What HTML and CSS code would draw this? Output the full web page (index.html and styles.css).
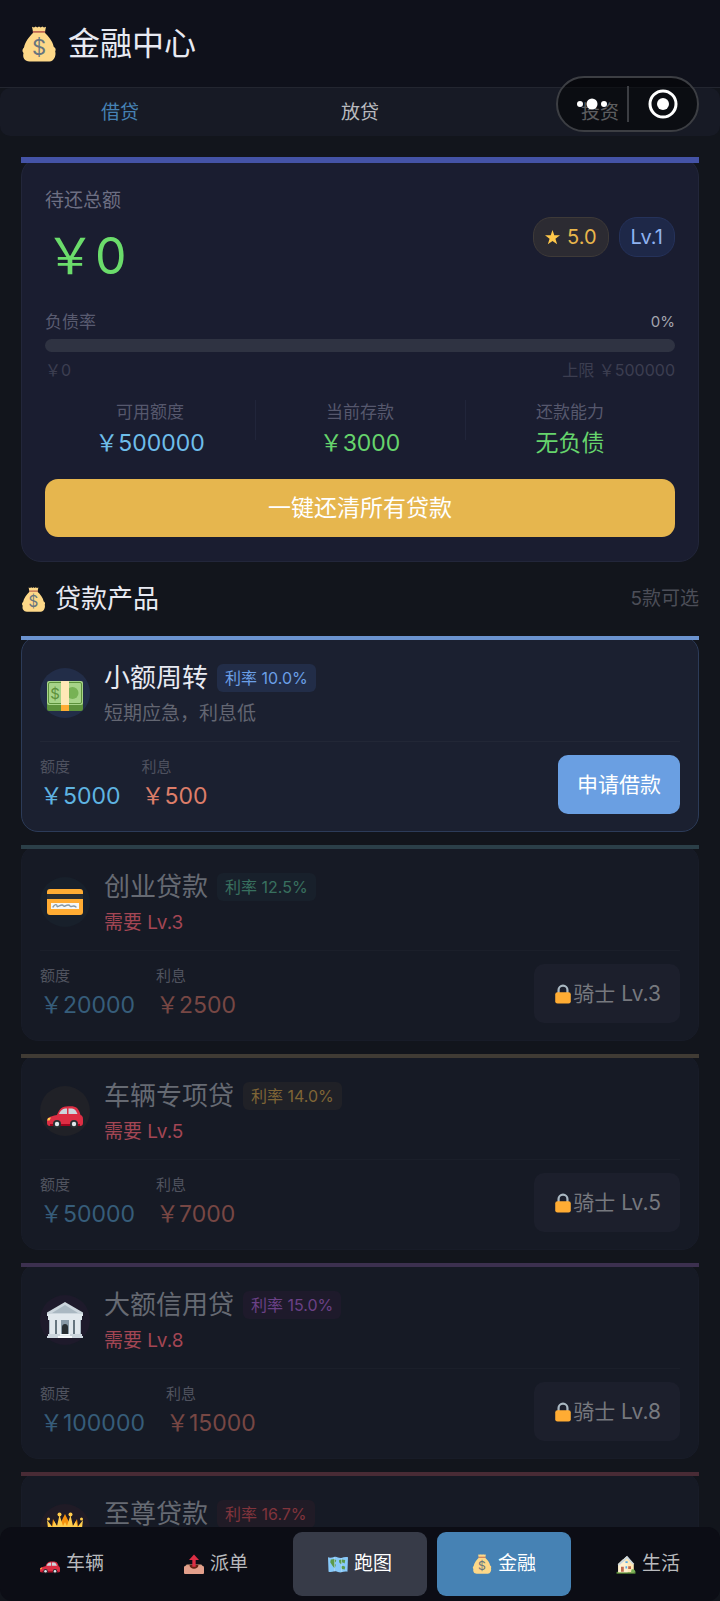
FILE: index.html
```html
<!DOCTYPE html>
<html lang="zh-CN">
<head>
    <meta charset="UTF-8">
    <meta name="viewport" content="width=device-width, initial-scale=1.0">
    <title>金融中心</title>
    <link rel="stylesheet" href="styles.css">
</head>
<body>
    <!-- icon sprites -->
    <svg class="sprites" aria-hidden="true">
        <symbol id="icon-bag" viewBox="0 0 36 36">
            <path fill="#fdd888" d="M11 .8l2 .7L14.700.5l1.600 1L18 .5l1.700 1 1.600-1 1.700 1 2-.7-1.200 6c4 3.800 8 8.700 8.900 14 1.900 1 2.500 2.700 1.500 4.800 1.200 3.900-1.200 9.900-5.700 9.900H8.500c-4.700 0-7.300-4-6-8.500-1.600-1.700-1.300-4 .5-5.500.9-5.400 5.200-10.900 9.200-14.700z"/>
            <path fill="#bf6952" d="M12.300 5h11.400c.8 0 .8 1.800 0 1.800H12.300c-.8 0-.8-1.800 0-1.800z"/>
            <text class="dollar" x="18" y="29" font-size="22" text-anchor="middle">$</text>
        </symbol>
        <symbol id="icon-cash" viewBox="0 0 36 36">
            <path fill="#5c913b" d="M0 28h36v6a2 2 0 0 1-2 2H2a2 2 0 0 1-2-2z"/>
            <rect fill="#a6d388" y="6" width="36" height="24" rx="2"/>
            <rect fill="none" stroke="#5c913b" x="1.500" y="7.500" width="33" height="21" rx="1.500"/>
            <circle fill="#77b255" cx="25.500" cy="18" r="6"/>
            <text class="dollar green" x="8" y="23.500" font-size="15" text-anchor="middle">$</text>
            <path fill="#ffe8b6" d="M14 6h8v24h-8z"/>
            <path fill="#ffac33" d="M14 30h8v6h-8z"/>
        </symbol>
        <symbol id="icon-card" viewBox="0 0 36 36">
            <rect fill="#ffac33" y="5" width="36" height="26" rx="3"/>
            <path fill="#292f33" d="M0 10h36v5H0z"/>
            <path fill="#f4f7f9" d="M4 19h28v6H4z"/>
            <path fill="none" stroke="#8899a6" stroke-width="1.400" stroke-linecap="round" d="M6 23c2-3 4-3 4-1s3-1 5-1 1 2 3 1 4-2 5 0 3-2 6 1"/>
        </symbol>
        <symbol id="icon-car" viewBox="0 0 36 36">
            <path fill="#dd2e44" d="M10 22c2-5 4-8 9-8.500 6-.5 9-.2 11 1.500 2 2 3 5 3.500 7 1.800.5 2.500 2 2.500 4v4c0 2-1 3-3 3H3c-2 0-3-1.200-3-3v-2c0-3 2-4.500 10-6z"/>
            <path fill="#ccd6dd" d="M12 21c1.500-3.500 3.500-5.500 8-5.500V21zM21.500 15.500c4-.2 6 .2 7.500 2.500l1.500 3h-9z"/>
            <path fill="#a0041e" d="M3 31h30v2H3z"/>
            <circle fill="#292f33" cx="10" cy="31" r="4"/><circle fill="#292f33" cx="27" cy="31" r="4"/>
            <circle fill="#e1e8ed" cx="10" cy="31" r="2.200"/><circle fill="#e1e8ed" cx="27" cy="31" r="2.200"/>
            <path fill="#ffcc4d" d="M1 25l3-.5-1.500 3H.2z"/>
        </symbol>
        <symbol id="icon-bank" viewBox="0 0 36 36">
            <path fill="#aab8c2" d="M2 16h32v17H2z"/>
            <path fill="#66757f" d="M8 18h4v14H8zM24 18h4v14h-4z"/>
            <path fill="#8899a6" d="M13 18h10v15H13z"/>
            <path fill="#292f33" d="M15 33v-8c0-4 6-4 6 0v8z"/>
            <path fill="#e1e8ed" d="M3 18h5v14H3zM10 18h4v14h-4zM22 18h4v14h-4zM28 18h5v14h-5z"/>
            <path fill="#ccd6dd" d="M18 0l18 10.500V13H0v-2.500z"/>
            <path fill="#aab8c2" d="M18 3l13 8H5z"/>
            <path fill="#e1e8ed" d="M0 12h36v2H0zM1 14h34v4H1z"/>
            <path fill="#ccd6dd" d="M1 32h34v2H1zM0 34h36v2H0z"/>
            <path fill="#f5f8fa" d="M13 32h10v1.500H13zM11 34h14v2H11z"/>
        </symbol>
        <symbol id="icon-crown" viewBox="0 0 36 36">
            <path fill="#f4900c" d="M3 30L6 8l5 9 7-14 7 14 5-9 3 22z"/>
            <path fill="#ffcc4d" d="M3 34L0 9l5.500 7L7 10l3 5 2.500-11 3.500 11 2-4 2 4 3.500-11L26 15l3-5 1.500 6L36 9l-3 25z"/>
            <path fill="#ffac33" d="M6 22h24v3H6z"/>
            <g fill="#ffcc4d"><circle cx="1.500" cy="8" r="1.500"/><circle cx="12.500" cy="3.500" r="2"/><circle cx="23.500" cy="3.500" r="2"/><circle cx="34.500" cy="8" r="1.500"/></g>
        </symbol>
        <symbol id="icon-lock" viewBox="0 0 36 36">
            <path fill="none" stroke="#aab8c2" stroke-width="4" d="M10 17v-6a8 8 0 0 1 16 0v6"/>
            <rect fill="#ffac33" x="4" y="15" width="28" height="20" rx="4"/>
        </symbol>
        <symbol id="icon-outbox" viewBox="0 0 36 36">
            <path fill="#d99e82" d="M5 19h26l5 5H0z"/>
            <rect fill="#e39f8b" y="22" width="36" height="14" rx="2"/>
            <path fill="#662113" d="M10 20h16c0 9-16 9-16 0z"/>
            <path fill="#dd2e44" d="M18 1l9 10h-6v12h-6V11H9z"/>
        </symbol>
        <symbol id="icon-map" viewBox="0 0 36 36">
            <path fill="#88c9f9" d="M0 6c4 2 8 0 12-1s8 3 12 2 8-2 12-1l-1 26c-4-1-7 0-11 1s-8-3-12-2-7 2-11 1z"/>
            <path fill="#5c9a4a" d="M5 10l7-1 3 3-3 4 2 4-2 6-4-5-4-6zM20 11l5-1 6 1-1 6-4-2-2 4-4-4zM23 23l4-2 4 2-1 5-5-1z"/>
            <path fill="#bbddf5" d="M11 6h1v25h-1zM24 7h1v25h-1z"/>
        </symbol>
        <symbol id="icon-house" viewBox="0 0 36 36">
            <path fill="#5c913b" d="M1 32h34v3.500H1z"/>
            <path fill="#ffe8b6" d="M4 18L19 4l13 14v15H4z"/>
            <path fill="#fff1d0" d="M4 18l8-8 9 9v14H4z"/>
            <path fill="#ccd6dd" d="M3 19L20 3l13 15-3 1L20 8 5 21z"/>
            <path fill="#c1694f" d="M9 23h5v9H9zM22 22h5v5h-5z"/>
            <path fill="#55acee" d="M17 22h3v4h-3zM17 13h4v3h-4z"/>
            <path fill="#77b255" d="M28 28c4-2 7 1 7 5h-8z"/>
        </symbol>
    </svg>

    <div class="app">
        <header class="header">
            <h1><svg class="icon-title" aria-hidden="true"><use href="#icon-bag"/></svg>金融中心</h1>
        </header>

        <div class="capsule">
            <button class="capsule-button" aria-label="更多">
                <svg class="dots" viewBox="0 0 32 12"><circle cx="4" cy="6" r="3"/><circle cx="16" cy="6" r="5.500"/><circle cx="28" cy="6" r="3"/></svg>
            </button>
            <button class="capsule-button" aria-label="关闭">
                <svg class="target" viewBox="0 0 30 30"><circle class="ring" cx="15" cy="15" r="13"/><circle cx="15" cy="15" r="6"/></svg>
            </button>
        </div>

        <nav class="tabs">
            <button class="tab active">借贷</button>
            <button class="tab">放贷</button>
            <button class="tab">投资</button>
        </nav>

        <main class="content">
            <section class="summary">
                <div class="summary-top">
                    <div>
                        <div class="summary-label">待还总额</div>
                        <div class="summary-total">￥0</div>
                    </div>
                    <div class="pills">
                        <span class="pill star"><svg class="icon-star" viewBox="0 0 20 20" aria-hidden="true"><path d="M10 0l2.400 7.100H20l-6.100 4.500 2.300 7.400-6.200-4.500L3.800 19l2.300-7.400L0 7.100h7.600z"/></svg>5.0</span>
                        <span class="pill level">Lv.1</span>
                    </div>
                </div>

                <div class="ratio">
                    <span>负债率</span>
                    <span class="ratio-value">0%</span>
                </div>
                <div class="ratio-bar"></div>
                <div class="ratio-range">
                    <span>￥0</span>
                    <span>上限 ￥500000</span>
                </div>

                <div class="stats">
                    <div class="stat">
                        <div class="stat-label">可用额度</div>
                        <div class="stat-value blue">￥500000</div>
                    </div>
                    <div class="stat">
                        <div class="stat-label">当前存款</div>
                        <div class="stat-value green">￥3000</div>
                    </div>
                    <div class="stat">
                        <div class="stat-label">还款能力</div>
                        <div class="stat-value green">无负债</div>
                    </div>
                </div>

                <button class="repay">一键还清所有贷款</button>
            </section>

            <div class="section-head">
                <h2><svg class="icon-section" aria-hidden="true"><use href="#icon-bag"/></svg>贷款产品</h2>
                <span class="section-count">5款可选</span>
            </div>

            <article class="loan theme-blue">
                <div class="loan-head">
                    <div class="loan-icon"><svg aria-hidden="true"><use href="#icon-cash"/></svg></div>
                    <div>
                        <div class="loan-title"><h3>小额周转</h3><span class="rate">利率 10.0%</span></div>
                        <div class="loan-desc">短期应急，利息低</div>
                    </div>
                </div>
                <div class="loan-body">
                    <div><div class="label">额度</div><div class="amount">￥5000</div></div>
                    <div><div class="label">利息</div><div class="amount interest">￥500</div></div>
                    <button class="apply">申请借款</button>
                </div>
            </article>

            <article class="loan locked theme-green">
                <div class="loan-head">
                    <div class="loan-icon"><svg aria-hidden="true"><use href="#icon-card"/></svg></div>
                    <div>
                        <div class="loan-title"><h3>创业贷款</h3><span class="rate">利率 12.5%</span></div>
                        <div class="loan-desc">需要 Lv.3</div>
                    </div>
                </div>
                <div class="loan-body">
                    <div><div class="label">额度</div><div class="amount">￥20000</div></div>
                    <div><div class="label">利息</div><div class="amount interest">￥2500</div></div>
                    <button class="apply" disabled><svg class="icon-lock" aria-hidden="true"><use href="#icon-lock"/></svg>骑士 Lv.3</button>
                </div>
            </article>

            <article class="loan locked theme-gold">
                <div class="loan-head">
                    <div class="loan-icon"><svg aria-hidden="true"><use href="#icon-car"/></svg></div>
                    <div>
                        <div class="loan-title"><h3>车辆专项贷</h3><span class="rate">利率 14.0%</span></div>
                        <div class="loan-desc">需要 Lv.5</div>
                    </div>
                </div>
                <div class="loan-body">
                    <div><div class="label">额度</div><div class="amount">￥50000</div></div>
                    <div><div class="label">利息</div><div class="amount interest">￥7000</div></div>
                    <button class="apply" disabled><svg class="icon-lock" aria-hidden="true"><use href="#icon-lock"/></svg>骑士 Lv.5</button>
                </div>
            </article>

            <article class="loan locked theme-purple">
                <div class="loan-head">
                    <div class="loan-icon"><svg aria-hidden="true"><use href="#icon-bank"/></svg></div>
                    <div>
                        <div class="loan-title"><h3>大额信用贷</h3><span class="rate">利率 15.0%</span></div>
                        <div class="loan-desc">需要 Lv.8</div>
                    </div>
                </div>
                <div class="loan-body">
                    <div><div class="label">额度</div><div class="amount">￥100000</div></div>
                    <div><div class="label">利息</div><div class="amount interest">￥15000</div></div>
                    <button class="apply" disabled><svg class="icon-lock" aria-hidden="true"><use href="#icon-lock"/></svg>骑士 Lv.8</button>
                </div>
            </article>

            <article class="loan locked theme-red">
                <div class="loan-head">
                    <div class="loan-icon"><svg aria-hidden="true"><use href="#icon-crown"/></svg></div>
                    <div class="loan-title"><h3>至尊贷款</h3><span class="rate">利率 16.7%</span></div>
                </div>
            </article>
        </main>

        <nav class="bottom-nav">
            <button class="nav-item"><svg aria-hidden="true"><use href="#icon-car"/></svg>车辆</button>
            <button class="nav-item"><svg aria-hidden="true"><use href="#icon-outbox"/></svg>派单</button>
            <button class="nav-item raised"><svg aria-hidden="true"><use href="#icon-map"/></svg>跑图</button>
            <button class="nav-item active"><svg aria-hidden="true"><use href="#icon-bag"/></svg>金融</button>
            <button class="nav-item"><svg aria-hidden="true"><use href="#icon-house"/></svg>生活</button>
        </nav>
    </div>
</body>
</html>
```
FILE: styles.css
```css
* {
    box-sizing: border-box;
}

body {
    margin: 0;
    background-color: #12151c;
    color: #e8eaf2;
    font-family: Inter, "Noto Sans CJK SC", sans-serif;
    font-size: 19px;
}

button {
    margin: 0;
    padding: 0;
    border: none;
    background: none;
    color: inherit;
    font: inherit;
}

h1, h2, h3 {
    margin: 0;
    font-weight: 400;
}

.sprites {
    position: absolute;
    width: 0;
    height: 0;
}

.dollar {
    fill: #67757f;
    font-family: Inter, sans-serif;
}

.dollar.green {
    fill: #5c913b;
}

.app {
    position: relative;
    display: flex;
    flex-direction: column;
    height: 100vh;
}

/* header */
.header {
    flex: none;
    padding: 20px 21px 19px;
    border-bottom: 1px solid #232630;
    background-color: #0f111b;
}

.header h1 {
    display: flex;
    align-items: center;
    gap: 11px;
    font-size: 32px;
    line-height: 48px;
}

.icon-title {
    width: 36px;
    height: 36px;
}

.capsule {
    position: absolute;
    top: 76px;
    right: 21px;
    z-index: 2;
    display: flex;
    align-items: center;
    width: 143px;
    height: 56px;
    border: 2px solid #3c3e43;
    border-radius: 28px;
    background-color: rgba(0, 0, 0, 0.5);
}

.capsule-button {
    display: flex;
    flex: 1;
    align-items: center;
    justify-content: center;
    height: 36px;
}

.capsule-button + .capsule-button {
    border-left: 2px solid #3c3e43;
}

.capsule svg {
    fill: #fff;
}

.dots {
    width: 32px;
    height: 12px;
}

.target {
    width: 30px;
    height: 30px;
}

.target .ring {
    fill: none;
    stroke: #fff;
    stroke-width: 3;
}

/* tabs */
.tabs {
    display: flex;
    flex: none;
    border-radius: 10px;
    background-color: #171a25;
}

.tab {
    flex: 1;
    padding-top: 2px;
    color: #b9babf;
    line-height: 46px;
}

.tab.active {
    color: #4682b4;
}

.content {
    flex: 1;
    min-height: 0;
    padding: 21px 21px 0;
    overflow-y: auto;
    scrollbar-width: none;
}

/* summary card */
.summary {
    position: relative;
    padding: 24px 23px;
    border: 1px solid #22263a;
    border-radius: 20px;
    background-color: #1a1d30;
}

.summary::before,
.loan::before {
    content: "";
    position: absolute;
    top: -1px;
    left: -1px;
    right: -1px;
    height: 6px;
    background-color: #4453a6;
}

.summary-top {
    display: flex;
    align-items: center;
    justify-content: space-between;
}

.summary-label {
    color: #6d6f83;
    line-height: 38px;
}

.summary-total {
    color: #6bdc6b;
    font-size: 50px;
    line-height: 72px;
}

.pills {
    display: flex;
    gap: 10px;
}

.pill {
    display: flex;
    align-items: center;
    gap: 7px;
    height: 40px;
    padding: 0 11px;
    border: 1px solid;
    border-radius: 18px;
    font-size: 20px;
}

.pill.star {
    border-color: #3e3a38;
    background-color: #2c2b32;
    color: #e8b64c;
}

.pill.level {
    border-color: #25325a;
    background-color: #1e2848;
    color: #8fb2f0;
}

.icon-star {
    width: 15px;
    height: 15px;
    fill: #ffc84a;
}

.ratio,
.ratio-range {
    display: flex;
    justify-content: space-between;
}

.ratio {
    margin-top: 15px;
    color: #595b70;
    font-size: 17px;
    line-height: 30px;
}

.ratio-value {
    color: #a4a5ae;
    font-size: 15px;
}

.ratio-bar {
    height: 13px;
    margin-top: 2px;
    border-radius: 7px;
    background-color: #2f3342;
}

.ratio-range {
    color: #3c3e50;
    font-size: 16px;
    line-height: 36px;
}

.stats {
    display: flex;
    margin: 10px 0 18px;
}

.stat {
    position: relative;
    flex: 1;
    text-align: center;
}

.stat + .stat::before {
    content: "";
    position: absolute;
    top: 2px;
    left: 0;
    width: 1px;
    height: 40px;
    background-color: #21253a;
}

.stat-label {
    color: #56586d;
    font-size: 17px;
    line-height: 28px;
}

.stat-value {
    font-size: 23px;
    line-height: 35px;
}

.blue {
    color: #6ebeea;
}

.green {
    color: #66d46c;
}

.repay {
    display: block;
    width: 100%;
    border-radius: 13px;
    background-color: #e6b64e;
    color: #fff;
    font-size: 23px;
    line-height: 58px;
}

.section-head {
    display: flex;
    align-items: center;
    justify-content: space-between;
    height: 74px;
}

.section-head h2 {
    display: flex;
    align-items: center;
    gap: 9px;
    font-size: 26px;
    line-height: 36px;
}

.icon-section {
    width: 25px;
    height: 25px;
}

.section-count {
    color: #4c4e58;
    line-height: 28px;
}

/* loan cards */
.loan {
    position: relative;
    margin-bottom: 13px;
    padding: 20px 18px 17px;
    border: 1px solid #2c3b58;
    border-radius: 17px;
    background-color: #1b2030;
}

.loan::before {
    height: 4px;
    background-color: #6b93cf;
}

.loan-head {
    display: flex;
    align-items: center;
    gap: 14px;
    padding-bottom: 12px;
    border-bottom: 1px solid #222736;
}

.loan-icon {
    display: flex;
    align-items: center;
    justify-content: center;
    width: 50px;
    height: 50px;
    border-radius: 50%;
    background-color: #222d48;
}

.loan-icon svg {
    width: 36px;
    height: 36px;
}

.loan-title {
    display: flex;
    align-items: center;
    gap: 9px;
    height: 42px;
}

.loan-title h3 {
    font-size: 26px;
    line-height: 36px;
}

.rate {
    padding: 0 8px;
    border-radius: 6px;
    background-color: #222d48;
    color: #6b9fe6;
    font-size: 16px;
    line-height: 28px;
}

.loan-desc {
    color: #636672;
    line-height: 30px;
}

.loan-body {
    display: flex;
    gap: 21px;
    padding-top: 13px;
}

.label {
    color: #4e515f;
    font-size: 15px;
    line-height: 24px;
}

.amount {
    color: #5fb4e2;
    font-size: 23px;
    line-height: 35px;
}

.amount.interest {
    color: #dd7d69;
}

.apply {
    display: flex;
    align-items: center;
    margin-left: auto;
    padding: 0 19px;
    border-radius: 10px;
    background-color: #6a9fe2;
    color: #fff;
    font-size: 21px;
    line-height: 28px;
}

.locked {
    border-color: #181c28;
    background-color: #161a25;
}

.locked .loan-head {
    border-color: #1b1f2a;
}

.locked .loan-title h3 {
    color: #666a73;
}

.locked .loan-desc {
    color: #a34654;
}

.locked .label {
    color: #50535f;
}

.locked .amount {
    color: #365d7a;
}

.locked .amount.interest {
    color: #774744;
}

.locked .apply {
    background-color: #1c1f2c;
    color: #76787e;
}

.icon-lock {
    width: 20px;
    height: 20px;
}

.theme-green::before {
    background-color: #2b3f48;
}

.theme-green .loan-icon,
.theme-green .rate {
    background-color: #18202b;
}

.theme-green .rate {
    color: #38705f;
}

.theme-gold::before {
    background-color: #403b34;
}

.theme-gold .loan-icon,
.theme-gold .rate {
    background-color: #202127;
}

.theme-gold .rate {
    color: #7f6536;
}

.theme-purple::before {
    background-color: #3c304f;
}

.theme-purple .loan-icon,
.theme-purple .rate {
    background-color: #1e1a2b;
}

.theme-purple .rate {
    color: #6b4186;
}

.theme-red::before {
    background-color: #482b35;
}

.theme-red .loan-icon,
.theme-red .rate {
    background-color: #201b26;
}

.theme-red .rate {
    color: #80343c;
}

.theme-red .loan-head {
    min-height: 85px;
    align-items: flex-start;
}

.theme-red .loan-icon {
    margin-top: 11px;
}

/* bottom navigation */
.bottom-nav {
    display: flex;
    flex: none;
    gap: 10px;
    padding: 5px;
    border-radius: 12px;
    background-color: #0c0d15;
}

.nav-item {
    display: flex;
    flex: 1;
    align-items: center;
    justify-content: center;
    gap: 6px;
    height: 64px;
    border-radius: 9px;
    color: #b9babd;
    line-height: 28px;
}

.nav-item svg {
    width: 20px;
    height: 20px;
}

.nav-item.raised {
    background-color: #373b48;
    color: #fff;
}

.nav-item.active {
    background-color: #4682b4;
    color: #fff;
}
```
